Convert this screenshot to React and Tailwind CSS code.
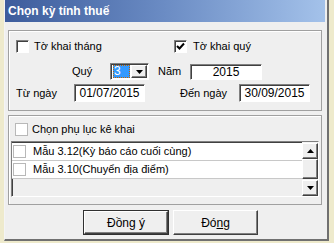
import React from 'react';

const font = { fontFamily: '"Liberation Sans", Arial, sans-serif' };

function Check({ checked, flat }) {
  return (
    <span
      className={
        'inline-flex h-[13px] w-[13px] shrink-0 items-center justify-center bg-white ' +
        (flat
          ? 'border border-[#b8b8b8]'
          : 'border-t border-l border-b border-r border-t-[#808080] border-l-[#808080] border-b-white border-r-white shadow-[inset_1px_1px_0_#404040]')
      }
    >
      {checked && (
        <svg width="9" height="9" viewBox="0 0 9 9">
          <path d="M1 4 L3.5 6.5 L8 1.5" stroke="#000" strokeWidth="2" fill="none" />
        </svg>
      )}
    </span>
  );
}

function Field({ w, h, children }) {
  return (
    <div
      className={`flex items-center justify-center bg-white border border-t-[#808080] border-l-[#808080] border-b-white border-r-white shadow-[inset_1px_1px_0_#404040] text-[12px] ${w} ${h}`}
    >
      {children}
    </div>
  );
}

function Arrow({ up }) {
  return (
    <svg width="7" height="4" viewBox="0 0 7 4">
      <path d={up ? 'M0 4 L3.5 0 L7 4 Z' : 'M0 0 L7 0 L3.5 4 Z'} fill="#000" />
    </svg>
  );
}

function RaisedBox({ className, children }) {
  return (
    <div
      className={
        'flex items-center justify-center bg-[#efefef] border border-t-white border-l-white border-b-[#404040] border-r-[#404040] shadow-[inset_-1px_-1px_0_#808080] ' +
        className
      }
    >
      {children}
    </div>
  );
}

export default function App() {
  return (
    <div className="w-[334px] h-[243px] bg-[#eeeacc] overflow-hidden text-[11px] text-black" style={font}>
      <div className="ml-[4px] w-[325px] h-[241px] bg-[#efefef] border-l border-l-[#f4f4f4] border-r-2 border-r-[#707070] border-b-2 border-b-[#707070] flex flex-col">
        {/* Title bar */}
        <div className="h-[22px] mr-[2px] flex items-center pl-[3px] bg-gradient-to-r from-[#3d5c9c] via-[#6b8cc4] to-[#a4c2ea] text-white text-[12px] font-bold">
          Chọn kỳ tính thuế
        </div>

        {/* Group 1 */}
        <div className="mt-[8px] ml-[3px] w-[314px] h-[81px] border border-[#a0a0a0] shadow-[inset_1px_1px_0_#ffffff] flex flex-col">
          <div className="mt-[9px] flex items-center h-[13px]">
            <div className="ml-[7px] w-[158px] flex items-center gap-[5px]">
              <Check />
              <span>Tờ khai tháng</span>
            </div>
            <div className="flex items-center gap-[6px]">
              <Check checked />
              <span>Tờ khai quý</span>
            </div>
          </div>

          <div className="mt-[10px] flex items-center h-[17px]">
            <span className="ml-[63px] w-[38px]">Quý</span>
            <div className="w-[39px] h-[17px] flex bg-white border border-t-[#808080] border-l-[#808080] border-b-white border-r-white shadow-[inset_1px_1px_0_#404040] p-[1px] pl-[2px]">
              <div className="w-[17px] h-[13px] mt-[0px] bg-[#3399ff] text-white text-[12px] leading-[12px] pl-[1px] outline-dotted outline-1 outline-[#c06000] -outline-offset-1">
                3
              </div>
              <RaisedBox className="ml-[1px] w-[16px] h-[13px]">
                <Arrow />
              </RaisedBox>
            </div>
            <span className="ml-[9px] w-[32px]">Năm</span>
            <Field w="w-[72px]" h="h-[16px]">2015</Field>
          </div>

          <div className="mt-[4px] flex items-center h-[18px]">
            <span className="ml-[7px] w-[58px]">Từ ngày</span>
            <Field w="w-[71px]" h="h-[18px]">01/07/2015</Field>
            <span className="ml-[35px] w-[59px]">Đến ngày</span>
            <Field w="w-[71px]" h="h-[18px]">30/09/2015</Field>
          </div>
        </div>

        {/* Group 2 */}
        <div className="mt-[4px] ml-[3px] w-[314px] h-[90px] border border-[#a0a0a0] shadow-[inset_1px_1px_0_#ffffff] flex flex-col">
          <div className="mt-[7px] ml-[6px] flex items-center gap-[4px] h-[13px]">
            <Check flat />
            <span>Chọn phụ lục kê khai</span>
          </div>

          <div className="mt-[5px] ml-[2px] w-[308px] h-[56px] flex border border-t-[#808080] border-l-[#808080] border-b-white border-r-white shadow-[inset_1px_1px_0_#404040]">
            <div className="flex-1 flex flex-col pt-[1px]">
              <div className="h-[18px] bg-white border-b border-[#c8c8c8] flex items-center gap-[7px] pl-[1px]">
                <Check flat />
                <span>Mẫu 3.12(Kỳ báo cáo cuối cùng)</span>
              </div>
              <div className="h-[18px] bg-white border-b border-[#c8c8c8] flex items-center gap-[7px] pl-[1px]">
                <Check flat />
                <span>Mẫu 3.10(Chuyển địa điểm)</span>
              </div>
            </div>
            <div className="w-[16px] flex flex-col pt-[1px] bg-[#f4f4f4]">
              <RaisedBox className="h-[16px]">
                <Arrow up />
              </RaisedBox>
              <RaisedBox className="h-[20px]" />
              <div className="flex-1" />
              <RaisedBox className="h-[16px]">
                <Arrow />
              </RaisedBox>
            </div>
          </div>
        </div>

        {/* Buttons */}
        <div className="mt-[5px] ml-[78px] flex gap-[4px]">
          <div className="w-[86px] h-[25px] border border-[#303030] flex">
            <RaisedBox className="flex-1 text-[12px]">
              <span>
                Đồn<span className="underline">g</span> ý
              </span>
            </RaisedBox>
          </div>
          <RaisedBox className="w-[85px] h-[25px] text-[12px]">
            <span>
              Đó<span className="underline">n</span>g
            </span>
          </RaisedBox>
        </div>
      </div>
    </div>
  );
}
